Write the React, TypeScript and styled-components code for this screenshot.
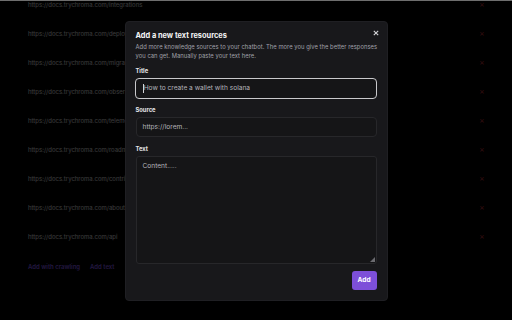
import * as React from "react";
import styled, { createGlobalStyle } from "styled-components";

const GlobalStyle = createGlobalStyle`
  html, body {
    margin: 0;
    padding: 0;
    background: #000;
    font-family: Inter, "Liberation Sans", sans-serif;
  }
  body {
    border-top: 1px solid #6e6e6e;
  }
`;

const Page = styled.div`
  height: 319px;
  padding: 0 24px 0 28px;
  box-sizing: border-box;
  display: flex;
  flex-direction: column;
`;

const ResourceRow = styled.div`
  height: 29px;
  display: flex;
  align-items: flex-start;
  justify-content: space-between;
  font-size: 6px;
  line-height: 7px;
  color: #ececef;
`;

const RemoveMark = styled.span`
  color: #d63c40;
  font-size: 8px;
  line-height: 7px;
  width: 12px;
  text-align: center;
`;

const Actions = styled.div`
  display: flex;
  gap: 10px;
  margin-top: 1px;
`;

const ActionLink = styled.a`
  color: #9061ff;
  font-size: 6px;
  font-weight: 600;
  text-decoration: none;
`;

const Backdrop = styled.div`
  position: fixed;
  inset: 1px 0 0 0;
  background: rgba(0, 0, 0, 0.76);
  display: flex;
  align-items: center;
  justify-content: center;
`;

const Dialog = styled.div`
  position: relative;
  width: 263px;
  box-sizing: border-box;
  padding: 9px 9px 10px 10px;
  background: #18181b;
  border: 1px solid #1f1f23;
  border-radius: 4px;
  display: flex;
  flex-direction: column;
`;

const CloseButton = styled.button`
  position: absolute;
  top: 6px;
  right: 6px;
  width: 10px;
  height: 10px;
  padding: 0;
  border: 0;
  background: transparent;
  display: flex;
  align-items: center;
  justify-content: center;
`;

const Heading = styled.h2`
  margin: 0;
  font-size: 7.4px;
  line-height: 10px;
  font-weight: 700;
  color: #f4f4f5;
`;

const Description = styled.p`
  margin: 1px 0 0;
  font-size: 5.8px;
  letter-spacing: 0.05px;
  line-height: 9px;
  color: #a1a1aa;
`;

const Label = styled.label<{ gap: number }>`
  margin-top: ${(p) => p.gap}px;
  font-size: 5.8px;
  line-height: 8px;
  font-weight: 700;
  color: #e4e4e7;
`;

const Field = styled.div<{ focused?: boolean }>`
  margin-top: 3px;
  height: ${(p) => (p.focused ? 21 : 20)}px;
  margin-left: ${(p) => (p.focused ? -1 : 0)}px;
  margin-right: 1px;
  box-sizing: border-box;
  border: ${(p) => (p.focused ? "1.5px solid #c9c9cc" : "1px solid #27272a")};
  border-radius: 4px;
  background: #151517;
  display: flex;
  align-items: center;
  padding-left: ${(p) => (p.focused ? 7 : 6)}px;
  font-size: 6.6px;
  color: #b4b4ba;
`;

const Caret = styled.span`
  width: 0.7px;
  height: 9px;
  background: #d4d4d8;
  margin-right: 0.5px;
`;

const TextArea = styled.div`
  position: relative;
  margin: 3px 1px 0 0;
  height: 108px;
  box-sizing: border-box;
  border: 1px solid #27272a;
  border-radius: 3px;
  background: #151517;
  padding: 5px 6px;
  font-size: 6.6px;
  line-height: 8px;
  color: #b4b4ba;
`;

const ResizeGrip = styled.svg`
  position: absolute;
  right: 1px;
  bottom: 1px;
`;

const Footer = styled.div`
  margin: 7px 1px 0 0;
  display: flex;
  justify-content: flex-end;
`;

const AddButton = styled.button`
  height: 19px;
  width: 25px;
  padding: 0;
  border: 0;
  border-radius: 3px;
  background: #7d4fd9;
  color: #fff;
  font-family: inherit;
  font-size: 6.6px;
  font-weight: 700;
`;

const urls = [
  "integrations",
  "deployment",
  "migration",
  "observability",
  "telemetry",
  "roadmap",
  "contributing",
  "about",
  "api",
];

const App = () => (
  <>
    <GlobalStyle />
    <Page>
      {urls.map((u) => (
        <ResourceRow key={u}>
          <span>https://docs.trychroma.com/{u}</span>
          <RemoveMark>×</RemoveMark>
        </ResourceRow>
      ))}
      <Actions>
        <ActionLink>Add with crawling</ActionLink>
        <ActionLink>Add text</ActionLink>
      </Actions>
    </Page>
    <Backdrop>
      <Dialog>
        <CloseButton aria-label="Close">
          <svg width="6" height="6" viewBox="0 0 6 6">
            <path d="M0.8 0.8 L5.2 5.2 M5.2 0.8 L0.8 5.2" stroke="#d4d4d8" strokeWidth="1.1" />
          </svg>
        </CloseButton>
        <Heading>Add a new text resources</Heading>
        <Description>
          Add more knowledge sources to your chatbot. The more you give the better responses you can get. Manually paste your text here.
        </Description>
        <Label gap={7}>Title</Label>
        <Field focused>
          <Caret />
          How to create a wallet with solana
        </Field>
        <Label gap={7}>Source</Label>
        <Field>https://lorem...</Field>
        <Label gap={8}>Text</Label>
        <TextArea>
          Content.....
          <ResizeGrip width="5" height="5" viewBox="0 0 5 5">
            <path d="M5 0 L5 5 L0 5 Z" fill="#6b6b70" />
          </ResizeGrip>
        </TextArea>
        <Footer>
          <AddButton>Add</AddButton>
        </Footer>
      </Dialog>
    </Backdrop>
  </>
);

export default App;
